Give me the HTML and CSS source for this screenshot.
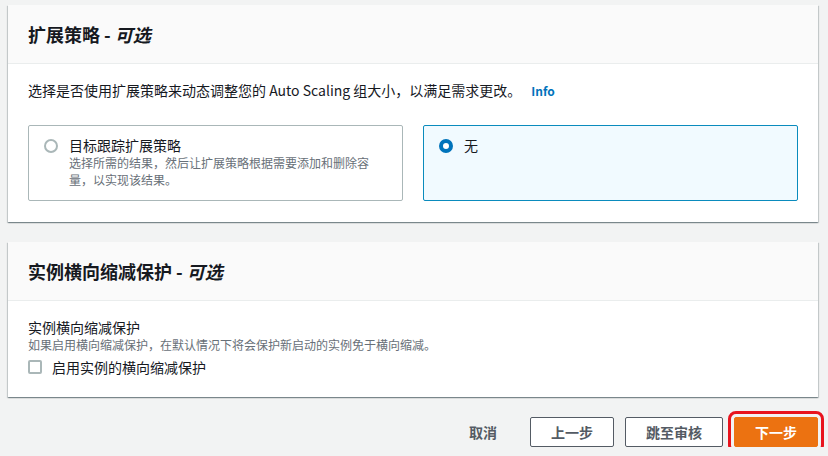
FILE: index.html
```html
<!DOCTYPE html>
<html lang="zh-CN">
<head>
<meta charset="utf-8">
<title>扩展策略</title>
<link rel="stylesheet" href="styles.css">
</head>
<body>
<div class="page">
  <section class="panel">
    <div class="panel-header">
      <h2 class="panel-title">扩展策略 - <i>可选</i></h2>
    </div>
    <div class="panel-body">
      <p class="desc">选择是否使用扩展策略来动态调整您的 Auto Scaling 组大小，以满足需求更改。<a class="info" href="#">Info</a></p>
      <div class="tiles">
        <label class="tile">
          <span class="radio"></span>
          <span class="tile-text">
            <span class="tile-title">目标跟踪扩展策略</span>
            <span class="tile-desc">选择所需的结果，然后让扩展策略根据需要添加和删除容量，以实现该结果。</span>
          </span>
        </label>
        <label class="tile tile-selected">
          <span class="radio radio-checked"></span>
          <span class="tile-text">
            <span class="tile-title">无</span>
          </span>
        </label>
      </div>
    </div>
  </section>

  <section class="panel panel-second">
    <div class="panel-header">
      <h2 class="panel-title">实例横向缩减保护 - <i>可选</i></h2>
    </div>
    <div class="panel-body panel-body-2">
      <div class="field-label">实例横向缩减保护</div>
      <div class="field-desc">如果启用横向缩减保护，在默认情况下将会保护新启动的实例免于横向缩减。</div>
      <label class="check-row">
        <span class="checkbox"></span>
        <span class="check-text">启用实例的横向缩减保护</span>
      </label>
    </div>
  </section>

  <div class="actions">
    <button class="btn btn-link">取消</button>
    <button class="btn btn-normal">上一步</button>
    <button class="btn btn-normal">跳至审核</button>
    <button class="btn btn-primary">下一步</button>
  </div>
</div>
</body>
</html>
```

FILE: styles.css
```css
* { box-sizing: border-box; }
html, body {
  margin: 0;
  padding: 0;
  background: #f2f3f3;
}
body {
  font-family: "Noto Sans CJK SC", "Noto Sans", sans-serif;
  color: #16191f;
  font-size: 14px;
  line-height: 20px;
}
.page {
  padding: 5px 10px 0 8px;
}
.panel {
  background: #fff;
  box-shadow: 0 1px 1px 0 rgba(0, 28, 36, 0.3), 1px 1px 1px 0 rgba(0, 28, 36, 0.15), -1px 1px 1px 0 rgba(0, 28, 36, 0.15);
}
.panel-second {
  margin-top: 20px;
}
.panel-header {
  background: #fafafa;
  border-bottom: 1px solid #eaeded;
  padding: 17px 20px;
}
.panel-title {
  margin: 0;
  font-size: 18px;
  line-height: 24px;
  font-weight: 700;
}
.panel-title i {
  font-style: italic;
}
.panel-body {
  padding: 16px 20px 21px;
}
.desc {
  margin: 0;
  line-height: 20px;
}
.info {
  color: #0073bb;
  font-weight: 700;
  font-size: 12px;
  text-decoration: none;
  margin-left: 10px;
}
.tiles {
  margin-top: 24px;
  display: grid;
  grid-template-columns: 1fr 1fr;
  gap: 20px;
}
.tile {
  display: flex;
  align-items: flex-start;
  gap: 11px;
  border: 1px solid #aab7b8;
  border-radius: 2px;
  padding: 10px 24px 12px 15px;
  background: #fff;
}
.tile-selected {
  border-color: #0a8bbd;
  background: #f1faff;
}
.radio {
  flex: none;
  width: 14px;
  height: 14px;
  margin-top: 3px;
  border-radius: 50%;
  border: 2px solid #aab7b8;
  background: #fff;
}
.radio-checked {
  border: 4px solid #0073bb;
}
.tile-text {
  display: flex;
  flex-direction: column;
}
.tile-title {
  line-height: 18px;
}
.tile-desc {
  font-size: 12px;
  line-height: 17px;
  color: #687078;
}
.panel-body-2 {
  padding: 16px 20px 20px;
}
.field-label {
  line-height: 20px;
}
.field-desc {
  font-size: 12px;
  line-height: 16px;
  color: #687078;
}
.check-row {
  margin-top: 4px;
  display: flex;
  align-items: center;
  gap: 10px;
  line-height: 20px;
}
.checkbox {
  flex: none;
  width: 14px;
  height: 14px;
  border: 2px solid #aab7b8;
  border-radius: 2px;
  background: #fff;
}
.actions {
  margin-top: 20px;
  display: flex;
  justify-content: flex-end;
  gap: 11px;
}
.btn {
  font-family: inherit;
  font-size: 14px;
  font-weight: 700;
  height: 30px;
  line-height: 20px;
  padding: 0 20px;
  border-radius: 2px;
  cursor: pointer;
}
.btn-link {
  background: transparent;
  border: 1px solid transparent;
  color: #545b64;
  margin-right: 1px;
}
.btn-normal {
  background: #fff;
  border: 1px solid #545b64;
  color: #545b64;
}
.btn-primary {
  background: #ec7211;
  border: 1px solid #ec7211;
  color: #fff;
  outline: 3px solid #e8141e;
  outline-offset: 3px;
}
```
